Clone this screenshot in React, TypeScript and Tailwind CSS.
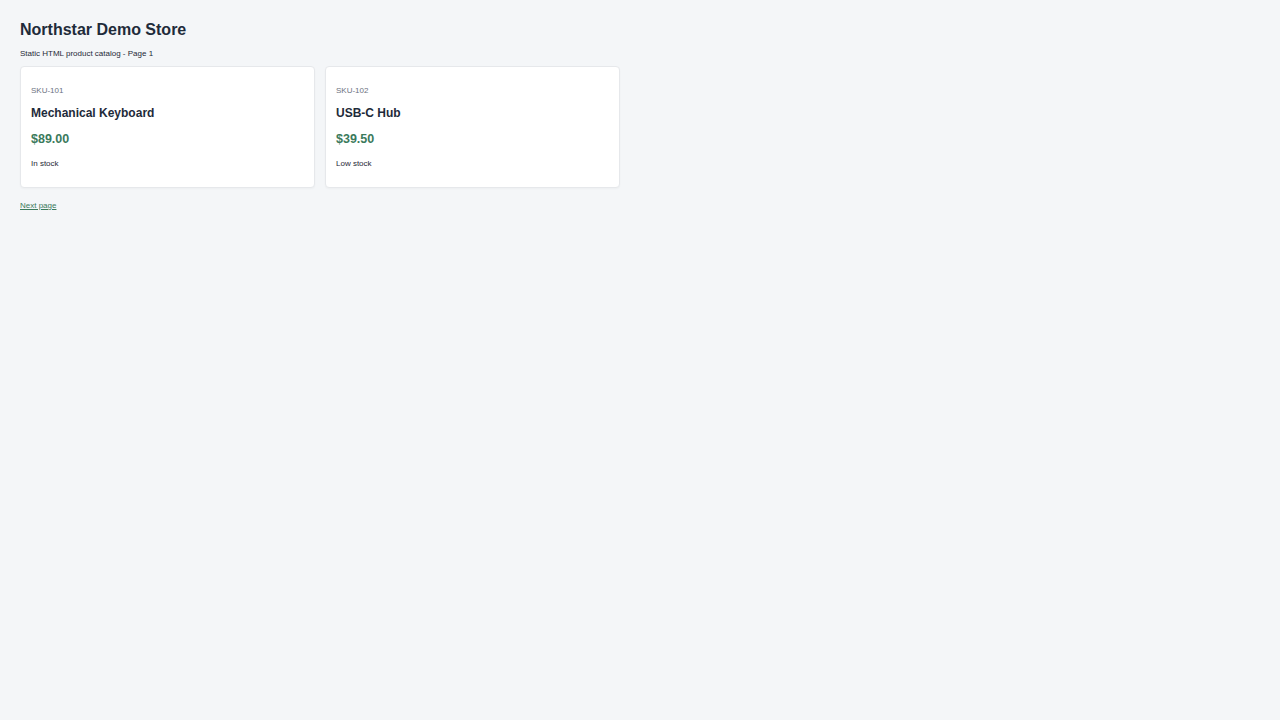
export default function App() {
  const products = [
    { sku: "SKU-101", name: "Mechanical Keyboard", price: "$89.00", stock: "In stock" },
    { sku: "SKU-102", name: "USB-C Hub", price: "$39.50", stock: "Low stock" },
  ];

  return (
    <div className="min-h-screen bg-[#f4f6f8] px-[20px] pt-[21px] font-['Liberation_Sans',Arial,sans-serif] text-[#1f2937]">
      <h1 className="text-[16px] leading-[18px] font-bold text-[#1e2b3a]">Northstar Demo Store</h1>
      <p className="mt-[10px] text-[8px] leading-[10px] text-[#1f2937]">Static HTML product catalog - Page 1</p>

      {/* Product grid */}
      <div className="mt-[7px] flex gap-[10px]">
        {products.map((p) => (
          <div
            key={p.sku}
            className="w-[295px] rounded-[4px] border border-[#e6e8eb] bg-white px-[10px] pt-[19px] pb-[18px] shadow-[0_1px_2px_rgba(0,0,0,0.03)]"
          >
            <div className="text-[8px] leading-[10px] text-[#6b7280]">{p.sku}</div>
            <div className="mt-[10px] text-[12px] leading-[14px] font-bold text-[#1e2b3a]">{p.name}</div>
            <div className="mt-[11px] text-[12.5px] leading-[16px] font-bold text-[#3b7a5c]">{p.price}</div>
            <div className="mt-[12px] text-[8px] leading-[10px] text-[#1f2937]">{p.stock}</div>
          </div>
        ))}
      </div>

      <a href="#" className="mt-[13px] inline-block text-[8px] leading-[10px] text-[#3b7a5c] underline">
        Next page
      </a>
    </div>
  );
}
